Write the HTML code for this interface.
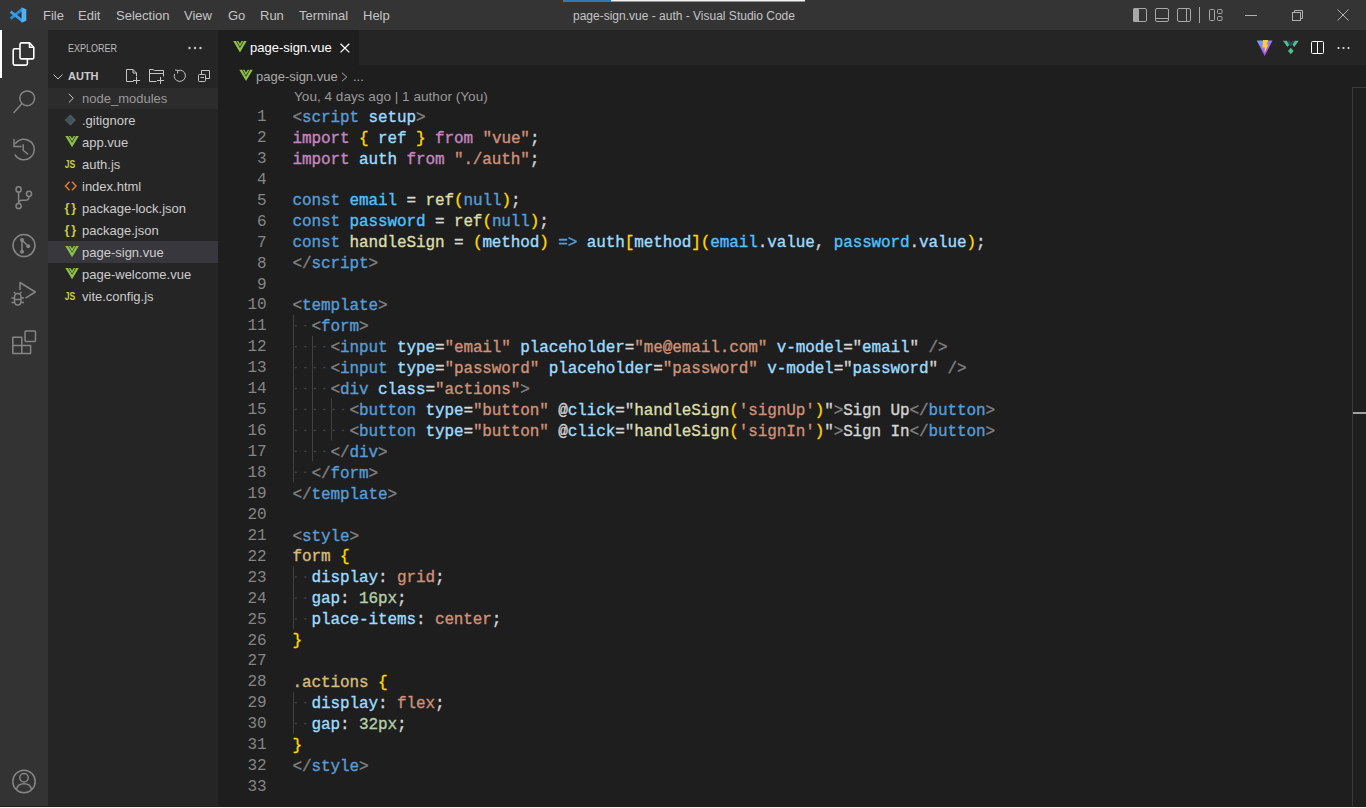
<!DOCTYPE html>
<html><head><meta charset="utf-8"><style>
*{margin:0;padding:0;box-sizing:border-box}
html,body{width:1366px;height:808px;overflow:hidden;background:#1e1e1e}
body{position:relative;font-family:"Liberation Sans",sans-serif}
.abs{position:absolute}
#title{left:0;top:0;width:1366px;height:30px;background:#343434}
.menu{position:absolute;top:8px;font-size:13px;color:#c4c4c4;white-space:nowrap}
#act{left:0;top:30px;width:48px;height:778px;background:#333333}
#side{left:48px;top:30px;width:170px;height:778px;background:#252526}
#tabs{left:218px;top:30px;width:1148px;height:35px;background:#252526}
#tab{left:218px;top:30px;width:141px;height:35px;background:#1e1e1e}
.ui{position:absolute;font-size:13px;color:#cccccc;white-space:nowrap}
.row{position:absolute;left:48px;width:170px;height:22px}
.fname{position:absolute;left:82px;font-size:13px;color:#cccccc;white-space:nowrap}
.ln{position:absolute;left:218px;width:48.5px;text-align:right;font-family:"Liberation Mono",monospace;font-size:16px;letter-spacing:-0.11px;line-height:20.94px;height:20.94px;color:#858585;white-space:pre}
.cl{-webkit-text-stroke:0.35px currentColor;position:absolute;left:292.5px;font-family:"Liberation Mono",monospace;font-size:16px;letter-spacing:-0.11px;line-height:20.94px;height:20.94px;color:#D4D4D4;white-space:pre}
.ws{color:#3e3e3e}
</style></head><body>
<div id="title" class="abs"></div>
<div class="menu" style="left:43px">File</div>
<div class="menu" style="left:78px">Edit</div>
<div class="menu" style="left:116px">Selection</div>
<div class="menu" style="left:184px">View</div>
<div class="menu" style="left:228px">Go</div>
<div class="menu" style="left:260px">Run</div>
<div class="menu" style="left:299px">Terminal</div>
<div class="menu" style="left:363px">Help</div>
<div class="menu" style="left:573px;top:9px;font-size:12px">page-sign.vue - auth - Visual Studio Code</div>
<div id="act" class="abs"></div>
<div class="abs" style="left:0;top:30px;width:2px;height:48px;background:#ffffff"></div>
<div id="side" class="abs"></div>
<div class="ui" style="left:68px;top:42px;font-size:11px;color:#bbbbbb;transform:scaleX(0.82);transform-origin:0 0">EXPLORER</div>
<div class="ui" style="left:68px;top:70px;font-size:11px;font-weight:bold;color:#cccccc">AUTH</div>
<div class="row" style="top:88px;height:21px;background:#2c2c2c"></div>
<div class="row" style="top:241px;background:#37373d"></div>
<div class="fname" style="top:91px;color:#999999">node_modules</div>
<div class="fname" style="top:113px">.gitignore</div>
<div class="fname" style="top:135px">app.vue</div>
<div class="fname" style="top:157px">auth.js</div>
<div class="fname" style="top:179px">index.html</div>
<div class="fname" style="top:201px">package-lock.json</div>
<div class="fname" style="top:223px">package.json</div>
<div class="fname" style="top:245px">page-sign.vue</div>
<div class="fname" style="top:267px">page-welcome.vue</div>
<div class="fname" style="top:289px">vite.config.js</div>
<div id="tabs" class="abs"></div>
<div id="tab" class="abs"></div>
<div class="ui" style="left:250px;top:40px;color:#ffffff">page-sign.vue</div>
<div class="ui" style="left:256px;top:69px;color:#a9a9a9">page-sign.vue</div><div class="ui" style="left:353px;top:69px;color:#a9a9a9">...</div>
<div class="ui" style="left:294px;top:89px;font-size:13.6px;color:#999999">You, 4 days ago | 1 author (You)</div>
<svg class="abs" style="left:0;top:0" width="1366" height="808"><rect x="294.80" y="325.00" width="2" height="1.4" fill="#454545"/><rect x="304.29" y="325.00" width="2" height="1.4" fill="#454545"/><rect x="294.80" y="345.94" width="2" height="1.4" fill="#454545"/><rect x="304.29" y="345.94" width="2" height="1.4" fill="#454545"/><rect x="313.78" y="345.94" width="2" height="1.4" fill="#454545"/><rect x="323.27" y="345.94" width="2" height="1.4" fill="#454545"/><rect x="294.80" y="366.88" width="2" height="1.4" fill="#454545"/><rect x="304.29" y="366.88" width="2" height="1.4" fill="#454545"/><rect x="313.78" y="366.88" width="2" height="1.4" fill="#454545"/><rect x="323.27" y="366.88" width="2" height="1.4" fill="#454545"/><rect x="294.80" y="387.82" width="2" height="1.4" fill="#454545"/><rect x="304.29" y="387.82" width="2" height="1.4" fill="#454545"/><rect x="313.78" y="387.82" width="2" height="1.4" fill="#454545"/><rect x="323.27" y="387.82" width="2" height="1.4" fill="#454545"/><rect x="294.80" y="408.76" width="2" height="1.4" fill="#454545"/><rect x="304.29" y="408.76" width="2" height="1.4" fill="#454545"/><rect x="313.78" y="408.76" width="2" height="1.4" fill="#454545"/><rect x="323.27" y="408.76" width="2" height="1.4" fill="#454545"/><rect x="332.76" y="408.76" width="2" height="1.4" fill="#454545"/><rect x="342.25" y="408.76" width="2" height="1.4" fill="#454545"/><rect x="294.80" y="429.70" width="2" height="1.4" fill="#454545"/><rect x="304.29" y="429.70" width="2" height="1.4" fill="#454545"/><rect x="313.78" y="429.70" width="2" height="1.4" fill="#454545"/><rect x="323.27" y="429.70" width="2" height="1.4" fill="#454545"/><rect x="332.76" y="429.70" width="2" height="1.4" fill="#454545"/><rect x="342.25" y="429.70" width="2" height="1.4" fill="#454545"/><rect x="294.80" y="450.64" width="2" height="1.4" fill="#454545"/><rect x="304.29" y="450.64" width="2" height="1.4" fill="#454545"/><rect x="313.78" y="450.64" width="2" height="1.4" fill="#454545"/><rect x="323.27" y="450.64" width="2" height="1.4" fill="#454545"/><rect x="294.80" y="471.58" width="2" height="1.4" fill="#454545"/><rect x="304.29" y="471.58" width="2" height="1.4" fill="#454545"/><rect x="294.80" y="576.28" width="2" height="1.4" fill="#454545"/><rect x="304.29" y="576.28" width="2" height="1.4" fill="#454545"/><rect x="294.80" y="597.22" width="2" height="1.4" fill="#454545"/><rect x="304.29" y="597.22" width="2" height="1.4" fill="#454545"/><rect x="294.80" y="618.16" width="2" height="1.4" fill="#454545"/><rect x="304.29" y="618.16" width="2" height="1.4" fill="#454545"/><rect x="294.80" y="701.92" width="2" height="1.4" fill="#454545"/><rect x="304.29" y="701.92" width="2" height="1.4" fill="#454545"/><rect x="294.80" y="722.86" width="2" height="1.4" fill="#454545"/><rect x="304.29" y="722.86" width="2" height="1.4" fill="#454545"/><rect x="293.00" y="314.90" width="1" height="167.52" fill="#404040"/><rect x="312.00" y="335.84" width="1" height="125.64" fill="#404040"/><rect x="331.00" y="398.66" width="1" height="41.88" fill="#404040"/><rect x="293.00" y="566.18" width="1" height="62.82" fill="#404040"/><rect x="293.00" y="691.82" width="1" height="41.88" fill="#404040"/></svg><div class="ln" style="top:107.00px">1</div>
<div class="cl" style="top:107.70px"><span style="color:#808080">&lt;</span><span style="color:#569CD6">script</span><span style="color:#D4D4D4"> </span><span style="color:#9CDCFE">setup</span><span style="color:#808080">&gt;</span></div>
<div class="ln" style="top:127.94px">2</div>
<div class="cl" style="top:128.64px"><span style="color:#C586C0">import</span><span style="color:#D4D4D4"> </span><span style="color:#FFD700">{</span><span style="color:#D4D4D4"> </span><span style="color:#9CDCFE">ref</span><span style="color:#D4D4D4"> </span><span style="color:#FFD700">}</span><span style="color:#D4D4D4"> </span><span style="color:#C586C0">from</span><span style="color:#D4D4D4"> </span><span style="color:#CE9178">"vue"</span><span style="color:#D4D4D4">;</span></div>
<div class="ln" style="top:148.88px">3</div>
<div class="cl" style="top:149.58px"><span style="color:#C586C0">import</span><span style="color:#D4D4D4"> </span><span style="color:#9CDCFE">auth</span><span style="color:#D4D4D4"> </span><span style="color:#C586C0">from</span><span style="color:#D4D4D4"> </span><span style="color:#CE9178">"./auth"</span><span style="color:#D4D4D4">;</span></div>
<div class="ln" style="top:169.82px">4</div>
<div class="cl" style="top:170.52px"></div>
<div class="ln" style="top:190.76px">5</div>
<div class="cl" style="top:191.46px"><span style="color:#569CD6">const</span><span style="color:#D4D4D4"> </span><span style="color:#4FC1FF">email</span><span style="color:#D4D4D4"> = </span><span style="color:#DCDCAA">ref</span><span style="color:#FFD700">(</span><span style="color:#569CD6">null</span><span style="color:#FFD700">)</span><span style="color:#D4D4D4">;</span></div>
<div class="ln" style="top:211.70px">6</div>
<div class="cl" style="top:212.40px"><span style="color:#569CD6">const</span><span style="color:#D4D4D4"> </span><span style="color:#4FC1FF">password</span><span style="color:#D4D4D4"> = </span><span style="color:#DCDCAA">ref</span><span style="color:#FFD700">(</span><span style="color:#569CD6">null</span><span style="color:#FFD700">)</span><span style="color:#D4D4D4">;</span></div>
<div class="ln" style="top:232.64px">7</div>
<div class="cl" style="top:233.34px"><span style="color:#569CD6">const</span><span style="color:#D4D4D4"> </span><span style="color:#DCDCAA">handleSign</span><span style="color:#D4D4D4"> = </span><span style="color:#FFD700">(</span><span style="color:#9CDCFE">method</span><span style="color:#FFD700">)</span><span style="color:#D4D4D4"> </span><span style="color:#569CD6">=&gt;</span><span style="color:#D4D4D4"> </span><span style="color:#9CDCFE">auth</span><span style="color:#FFD700">[</span><span style="color:#9CDCFE">method</span><span style="color:#FFD700">]</span><span style="color:#FFD700">(</span><span style="color:#4FC1FF">email</span><span style="color:#D4D4D4">.</span><span style="color:#9CDCFE">value</span><span style="color:#D4D4D4">, </span><span style="color:#4FC1FF">password</span><span style="color:#D4D4D4">.</span><span style="color:#9CDCFE">value</span><span style="color:#FFD700">)</span><span style="color:#D4D4D4">;</span></div>
<div class="ln" style="top:253.58px">8</div>
<div class="cl" style="top:254.28px"><span style="color:#808080">&lt;/</span><span style="color:#569CD6">script</span><span style="color:#808080">&gt;</span></div>
<div class="ln" style="top:274.52px">9</div>
<div class="cl" style="top:275.22px"></div>
<div class="ln" style="top:295.46px">10</div>
<div class="cl" style="top:296.16px"><span style="color:#808080">&lt;</span><span style="color:#569CD6">template</span><span style="color:#808080">&gt;</span></div>
<div class="ln" style="top:316.40px">11</div>
<div class="cl" style="top:317.10px">  <span style="color:#808080">&lt;</span><span style="color:#569CD6">form</span><span style="color:#808080">&gt;</span></div>
<div class="ln" style="top:337.34px">12</div>
<div class="cl" style="top:338.04px">    <span style="color:#808080">&lt;</span><span style="color:#569CD6">input</span><span style="color:#D4D4D4"> </span><span style="color:#9CDCFE">type</span><span style="color:#D4D4D4">=</span><span style="color:#CE9178">"email"</span><span style="color:#D4D4D4"> </span><span style="color:#9CDCFE">placeholder</span><span style="color:#D4D4D4">=</span><span style="color:#CE9178">"me@email.com"</span><span style="color:#D4D4D4"> </span><span style="color:#9CDCFE">v-model</span><span style="color:#D4D4D4">="</span><span style="color:#9CDCFE">email</span><span style="color:#D4D4D4">"</span><span style="color:#D4D4D4"> </span><span style="color:#808080">/&gt;</span></div>
<div class="ln" style="top:358.28px">13</div>
<div class="cl" style="top:358.98px">    <span style="color:#808080">&lt;</span><span style="color:#569CD6">input</span><span style="color:#D4D4D4"> </span><span style="color:#9CDCFE">type</span><span style="color:#D4D4D4">=</span><span style="color:#CE9178">"password"</span><span style="color:#D4D4D4"> </span><span style="color:#9CDCFE">placeholder</span><span style="color:#D4D4D4">=</span><span style="color:#CE9178">"password"</span><span style="color:#D4D4D4"> </span><span style="color:#9CDCFE">v-model</span><span style="color:#D4D4D4">="</span><span style="color:#9CDCFE">password</span><span style="color:#D4D4D4">"</span><span style="color:#D4D4D4"> </span><span style="color:#808080">/&gt;</span></div>
<div class="ln" style="top:379.22px">14</div>
<div class="cl" style="top:379.92px">    <span style="color:#808080">&lt;</span><span style="color:#569CD6">div</span><span style="color:#D4D4D4"> </span><span style="color:#9CDCFE">class</span><span style="color:#D4D4D4">=</span><span style="color:#CE9178">"actions"</span><span style="color:#808080">&gt;</span></div>
<div class="ln" style="top:400.16px">15</div>
<div class="cl" style="top:400.86px">      <span style="color:#808080">&lt;</span><span style="color:#569CD6">button</span><span style="color:#D4D4D4"> </span><span style="color:#9CDCFE">type</span><span style="color:#D4D4D4">=</span><span style="color:#CE9178">"button"</span><span style="color:#D4D4D4"> </span><span style="color:#D4D4D4">@</span><span style="color:#9CDCFE">click</span><span style="color:#D4D4D4">="</span><span style="color:#DCDCAA">handleSign</span><span style="color:#FFD700">(</span><span style="color:#CE9178">'signUp'</span><span style="color:#FFD700">)</span><span style="color:#D4D4D4">"</span><span style="color:#808080">&gt;</span><span style="color:#D4D4D4">Sign Up</span><span style="color:#808080">&lt;/</span><span style="color:#569CD6">button</span><span style="color:#808080">&gt;</span></div>
<div class="ln" style="top:421.10px">16</div>
<div class="cl" style="top:421.80px">      <span style="color:#808080">&lt;</span><span style="color:#569CD6">button</span><span style="color:#D4D4D4"> </span><span style="color:#9CDCFE">type</span><span style="color:#D4D4D4">=</span><span style="color:#CE9178">"button"</span><span style="color:#D4D4D4"> </span><span style="color:#D4D4D4">@</span><span style="color:#9CDCFE">click</span><span style="color:#D4D4D4">="</span><span style="color:#DCDCAA">handleSign</span><span style="color:#FFD700">(</span><span style="color:#CE9178">'signIn'</span><span style="color:#FFD700">)</span><span style="color:#D4D4D4">"</span><span style="color:#808080">&gt;</span><span style="color:#D4D4D4">Sign In</span><span style="color:#808080">&lt;/</span><span style="color:#569CD6">button</span><span style="color:#808080">&gt;</span></div>
<div class="ln" style="top:442.04px">17</div>
<div class="cl" style="top:442.74px">    <span style="color:#808080">&lt;/</span><span style="color:#569CD6">div</span><span style="color:#808080">&gt;</span></div>
<div class="ln" style="top:462.98px">18</div>
<div class="cl" style="top:463.68px">  <span style="color:#808080">&lt;/</span><span style="color:#569CD6">form</span><span style="color:#808080">&gt;</span></div>
<div class="ln" style="top:483.92px">19</div>
<div class="cl" style="top:484.62px"><span style="color:#808080">&lt;/</span><span style="color:#569CD6">template</span><span style="color:#808080">&gt;</span></div>
<div class="ln" style="top:504.86px">20</div>
<div class="cl" style="top:505.56px"></div>
<div class="ln" style="top:525.80px">21</div>
<div class="cl" style="top:526.50px"><span style="color:#808080">&lt;</span><span style="color:#569CD6">style</span><span style="color:#808080">&gt;</span></div>
<div class="ln" style="top:546.74px">22</div>
<div class="cl" style="top:547.44px"><span style="color:#D7BA7D">form</span><span style="color:#D4D4D4"> </span><span style="color:#FFD700">{</span></div>
<div class="ln" style="top:567.68px">23</div>
<div class="cl" style="top:568.38px">  <span style="color:#9CDCFE">display</span><span style="color:#D4D4D4">: </span><span style="color:#CE9178">grid</span><span style="color:#D4D4D4">;</span></div>
<div class="ln" style="top:588.62px">24</div>
<div class="cl" style="top:589.32px">  <span style="color:#9CDCFE">gap</span><span style="color:#D4D4D4">: </span><span style="color:#B5CEA8">16px</span><span style="color:#D4D4D4">;</span></div>
<div class="ln" style="top:609.56px">25</div>
<div class="cl" style="top:610.26px">  <span style="color:#9CDCFE">place-items</span><span style="color:#D4D4D4">: </span><span style="color:#CE9178">center</span><span style="color:#D4D4D4">;</span></div>
<div class="ln" style="top:630.50px">26</div>
<div class="cl" style="top:631.20px"><span style="color:#FFD700">}</span></div>
<div class="ln" style="top:651.44px">27</div>
<div class="cl" style="top:652.14px"></div>
<div class="ln" style="top:672.38px">28</div>
<div class="cl" style="top:673.08px"><span style="color:#D7BA7D">.actions</span><span style="color:#D4D4D4"> </span><span style="color:#FFD700">{</span></div>
<div class="ln" style="top:693.32px">29</div>
<div class="cl" style="top:694.02px">  <span style="color:#9CDCFE">display</span><span style="color:#D4D4D4">: </span><span style="color:#CE9178">flex</span><span style="color:#D4D4D4">;</span></div>
<div class="ln" style="top:714.26px">30</div>
<div class="cl" style="top:714.96px">  <span style="color:#9CDCFE">gap</span><span style="color:#D4D4D4">: </span><span style="color:#B5CEA8">32px</span><span style="color:#D4D4D4">;</span></div>
<div class="ln" style="top:735.20px">31</div>
<div class="cl" style="top:735.90px"><span style="color:#FFD700">}</span></div>
<div class="ln" style="top:756.14px">32</div>
<div class="cl" style="top:756.84px"><span style="color:#808080">&lt;/</span><span style="color:#569CD6">style</span><span style="color:#808080">&gt;</span></div>
<div class="ln" style="top:777.08px">33</div>
<div class="cl" style="top:777.78px"></div>
<svg class="abs" style="left:0;top:0" width="1366" height="808"><g stroke-linecap="butt"><line x1="23" y1="8.6" x2="10.6" y2="18.6" stroke="#2a8ad6" stroke-width="2.7"/><line x1="10.6" y1="11.6" x2="23" y2="21.4" stroke="#3a9fe8" stroke-width="2.7"/><path d="M21.6 7.4 L26.3 9.2 L26.3 20.8 L21.6 22.8 Z" fill="#4db2f6"/></g><g fill="none" stroke="#a8a8a8" stroke-width="1"><rect x="1133.5" y="8.5" width="13" height="13" rx="1.5"/><rect x="1155.5" y="8.5" width="13" height="13" rx="1.5"/><line x1="1155.5" y1="18.5" x2="1168.5" y2="18.5"/><rect x="1177.5" y="8.5" width="13" height="13" rx="1.5"/><line x1="1186.5" y1="8.5" x2="1186.5" y2="21.5"/><line x1="1199.5" y1="7" x2="1199.5" y2="23"/><rect x="1209.5" y="9.5" width="5" height="11" rx="1"/><rect x="1217.5" y="9.5" width="4.5" height="4" rx="1"/><rect x="1217.5" y="16.5" width="4.5" height="4" rx="1"/></g><rect x="1133" y="8" width="6" height="14" rx="1.5" fill="#a8a8a8"/><g fill="none" stroke="#b0b0b0" stroke-width="1"><line x1="1245" y1="15.5" x2="1257" y2="15.5"/><rect x="1292.5" y="12.5" width="8" height="8"/><path d="M1294.5 12.5 V10.5 H1302.5 V18.5 H1300.5"/><path d="M1337.5 9.5 L1348.5 20.5 M1348.5 9.5 L1337.5 20.5"/></g><g fill="none" stroke="#ffffff" stroke-width="1.6" stroke-linejoin="round"><path d="M21.5 42.9 H29.5 L33.8 47.2 V57.4 Q33.8 58.9 32.3 58.9 H21.5 Q20 58.9 20 57.4 V44.4 Q20 42.9 21.5 42.9 Z"/><path d="M29.5 42.9 V47.2 H33.8"/><path d="M20 48.8 H14.7 Q13.2 48.8 13.2 50.3 V63.6 Q13.2 65.1 14.7 65.1 H25.9 Q27.4 65.1 27.4 63.6 V58.9"/></g><g fill="none" stroke="#858585" stroke-width="1.5" stroke-linecap="round"><circle cx="27.2" cy="98.3" r="7.4"/><line x1="21.8" y1="103.8" x2="14" y2="112.5"/></g><g fill="none" stroke="#858585" stroke-width="1.5" stroke-linecap="round" stroke-linejoin="round"><path d="M15.5 143.5 A10.3 10.3 0 1 1 15.2 155"/><path d="M14 139.5 V146.5 H21"/><path d="M23.2 144.8 V150.2 L27.6 154"/></g><g fill="none" stroke="#858585" stroke-width="1.5"><circle cx="18.6" cy="189.4" r="2.6"/><circle cx="29" cy="193.8" r="2.6"/><circle cx="18.6" cy="206" r="2.6"/><path d="M18.6 192 V203.4"/><path d="M29 196.4 Q29 200.3 25 200.3 H22 Q18.6 200.3 18.6 203.4"/></g><g fill="none" stroke="#858585" stroke-width="1.5"><circle cx="24" cy="245.6" r="11"/><path d="M22 240 V251.7 M22 240 L28.2 246.3"/></g><g fill="#858585"><circle cx="22" cy="240" r="2"/><circle cx="28.2" cy="246.3" r="2"/><circle cx="22" cy="251.7" r="2"/></g><g fill="none" stroke="#858585" stroke-width="1.5" stroke-linejoin="round"><path d="M20 290 V282.5 L35.3 292 L25.5 298.2"/><path d="M14.5 297.5 Q14.5 293.5 17.8 293.5 Q21 293.5 21 297.5 V301 Q21 305 17.8 305 Q14.5 305 14.5 301 Z"/><path d="M11.5 298 H14.5 M21 298 H24 M11.5 302.5 H14.5 M21 302.5 H24 M14.5 299.5 H21 M15.5 293.5 L14 292 M20 293.5 L21.5 292"/></g><g fill="none" stroke="#858585" stroke-width="1.5" stroke-linejoin="round"><path d="M12.8 337.2 H21.8 V345.5 H30.6 V353.6 H12.8 Z M12.8 345.5 H21.8 V353.6"/><rect x="25" y="331" width="10.5" height="10.5" rx="1"/></g><g fill="none" stroke="#858585" stroke-width="1.5"><circle cx="24" cy="781.5" r="11.2"/><circle cx="24" cy="777.8" r="4.2"/><path d="M16.5 789.5 Q17.5 783.8 24 783.8 Q30.5 783.8 31.5 789.5"/></g><g fill="#c5c5c5"><circle cx="189.5" cy="48" r="1.2"/><circle cx="195" cy="48" r="1.2"/><circle cx="200.5" cy="48" r="1.2"/></g><g fill="none" stroke="#c5c5c5" stroke-width="1"><path d="M58.5 74.5 L58.5 74.5"/><path d="M53.5 74.5 L58 79 L62.5 74.5"/><path d="M133.5 81.5 H126.5 V69.5 H133 L136.5 73 V76.5"/><path d="M133 69.5 V73 H136.5"/><path d="M136.5 77 V84 M133 80.5 H140"/><path d="M156.5 81.5 H149.5 V69.5 H153 L154.5 70.5 H163.5 V76.5"/><path d="M149.5 73.5 H163.5"/><path d="M160.5 77 V84 M157 80.5 H164"/><path d="M177.88 70.54 A5.6 5.6 0 1 1 174.54 73.88"/><path d="M175 69.9 L177.9 70.5 L177.5 73.4"/><rect x="198.5" y="74.5" width="7" height="7" rx="0.8"/><path d="M201.5 74.5 V70.5 H209.5 V78.5 H205.5"/><path d="M200.5 77.5 H204"/></g><path d="M68.8 93.8 L73.3 98.2 L68.8 102.6" fill="none" stroke="#c5c5c5" stroke-width="1"/><g transform="translate(69.8,120) rotate(45)"><rect x="-3.8" y="-3.8" width="7.6" height="7.6" fill="#41535b"/></g><path d="M70.2 115.2 L74.9 120.1 L70.2 125" fill="none" stroke="#5c5c5c" stroke-width="1.3"/><path d="M65.30 135.90 L68.04 135.90 L72.05 142.76 L76.06 135.90 L78.80 135.90 L72.05 147.20 Z" fill="#8dc149"/><path d="M68.78 135.90 L70.47 135.90 L72.05 138.52 L73.63 135.90 L75.32 135.90 L72.05 141.53 Z" fill="#8dc149"/><text transform="translate(64.8,168) scale(0.84,1)" font-family="Liberation Sans" font-weight="bold" font-size="10.3" fill="#cbcb41">JS</text><path d="M69.5 181.8 L65.5 186 L69.5 190.2 M72 181.8 L76 186 L72 190.2" fill="none" stroke="#e37933" stroke-width="1.5"/><text x="64.5" y="211.6" font-family="Liberation Sans" font-weight="bold" font-size="12.5" textLength="11.5" fill="#cbcb41">{ }</text><text x="64.5" y="233.6" font-family="Liberation Sans" font-weight="bold" font-size="12.5" textLength="11.5" fill="#cbcb41">{ }</text><path d="M65.30 246.00 L68.04 246.00 L72.05 252.86 L76.06 246.00 L78.80 246.00 L72.05 257.30 Z" fill="#8dc149"/><path d="M68.78 246.00 L70.47 246.00 L72.05 248.62 L73.63 246.00 L75.32 246.00 L72.05 251.63 Z" fill="#8dc149"/><path d="M65.30 268.00 L68.04 268.00 L72.05 274.86 L76.06 268.00 L78.80 268.00 L72.05 279.30 Z" fill="#8dc149"/><path d="M68.78 268.00 L70.47 268.00 L72.05 270.62 L73.63 268.00 L75.32 268.00 L72.05 273.63 Z" fill="#8dc149"/><text transform="translate(64.8,300) scale(0.84,1)" font-family="Liberation Sans" font-weight="bold" font-size="10.3" fill="#cbcb41">JS</text><path d="M233.20 41.10 L235.94 41.10 L239.95 47.96 L243.96 41.10 L246.70 41.10 L239.95 52.40 Z" fill="#8dc149"/><path d="M236.68 41.10 L238.37 41.10 L239.95 43.72 L241.53 41.10 L243.22 41.10 L239.95 46.73 Z" fill="#8dc149"/><path d="M340.5 43.8 L349.3 52.4 M349.3 43.8 L340.5 52.4" fill="none" stroke="#ffffff" stroke-width="1.3"/><path d="M239.30 69.80 L242.04 69.80 L246.05 76.66 L250.06 69.80 L252.80 69.80 L246.05 81.10 Z" fill="#8dc149"/><path d="M242.78 69.80 L244.47 69.80 L246.05 72.42 L247.63 69.80 L249.32 69.80 L246.05 75.43 Z" fill="#8dc149"/><path d="M342 72.8 L346.8 77 L342 81.2" fill="none" stroke="#a9a9a9" stroke-width="1"/><defs><linearGradient id="vg" x1="0" y1="0" x2="1" y2="1"><stop offset="0" stop-color="#41d1ff"/><stop offset="1" stop-color="#bd34fe"/></linearGradient></defs><defs><linearGradient id="vg2" x1="0" y1="0" x2="0.6" y2="1"><stop offset="0" stop-color="#6aa8ff"/><stop offset="0.6" stop-color="#9b6cf5"/><stop offset="1" stop-color="#c13cf6"/></linearGradient></defs><path d="M1256.8 40.5 L1272.5 40.5 L1264.7 56 Z" fill="url(#vg2)"/><path d="M1263 40 L1268.3 40 L1266.5 44.5 L1268.5 44.5 L1264.5 53 L1264.8 47.5 L1262.5 47.5 Z" fill="#ffcc33"/><g fill="#4fc08d"><path d="M1283 40.8 L1286.8 40.8 L1289.3 44.8 L1287.4 47 Z"/><path d="M1298.7 40.8 L1294.9 40.8 L1292.4 44.8 L1294.3 47 Z"/><path d="M1290.8 47.8 L1293.6 50.9 L1290.8 54.3 L1288 50.9 Z"/></g><path d="M1287 40.8 L1289.5 40.8 L1290.85 43 L1292.2 40.8 L1294.7 40.8 L1292.4 44.6 L1290.85 46.5 L1289.3 44.6 Z" fill="#2e4a5a"/><g fill="none" stroke="#ffffff" stroke-width="1"><rect x="1311.5" y="41.5" width="12" height="12" rx="1"/><line x1="1317.5" y1="41.5" x2="1317.5" y2="53.5"/></g><g fill="#e0e0e0"><circle cx="1338.5" cy="48" r="1.1"/><circle cx="1343.5" cy="48" r="1.1"/><circle cx="1348.5" cy="48" r="1.1"/></g><rect x="1352" y="87" width="1" height="719" fill="#3a3a3a"/><rect x="1352" y="87" width="14" height="1" fill="#3a3a3a"/><rect x="1353" y="412" width="13" height="2" fill="#a0a0a0"/><rect x="563" y="0" width="48" height="2" fill="#3079b8"/><rect x="611" y="0" width="194" height="1.5" fill="#f2f2f2"/></svg>
<div class="abs" style="left:0;top:806px;width:1366px;height:1px;background:#202020"></div>
<div class="abs" style="left:0;top:807px;width:1366px;height:1px;background:#f0f0f0"></div>
</body></html>
